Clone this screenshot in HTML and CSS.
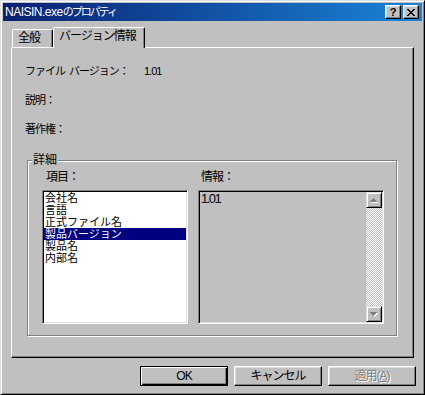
FILE: index.html
```html
<!DOCTYPE html>
<html lang="ja">
<head>
    <meta charset="UTF-8">
    <title>NAISIN.exeのプロパティ</title>
    <link rel="stylesheet" href="styles.css">
</head>
<body>
    <div class="window">
        <div class="titlebar">
            <div class="title">NAISIN.exe<span class="title-jp">のプロパティ</span></div>
            <div class="caption-buttons">
                <div class="cap-btn help">?</div>
                <div class="cap-btn">
                    <svg width="8" height="7" viewBox="0 0 8 7" shape-rendering="crispEdges">
                        <rect x="0" y="0" width="2" height="1"/><rect x="6" y="0" width="2" height="1"/>
                        <rect x="1" y="1" width="2" height="1"/><rect x="5" y="1" width="2" height="1"/>
                        <rect x="2" y="2" width="4" height="1"/>
                        <rect x="3" y="3" width="2" height="1"/>
                        <rect x="2" y="4" width="4" height="1"/>
                        <rect x="1" y="5" width="2" height="1"/><rect x="5" y="5" width="2" height="1"/>
                        <rect x="0" y="6" width="2" height="1"/><rect x="6" y="6" width="2" height="1"/>
                    </svg>
                </div>
            </div>
        </div>

        <div class="content">
            <div class="tabs">
                <div class="tab">全般</div>
                <div class="tab active">バージョン情報</div>
            </div>

            <div class="panel">
                <div class="field">
                    <span class="field-label"><span class="word">ファイル</span>バージョン：</span>
                    <span class="field-value">1.01</span>
                </div>
                <div class="field">
                    <span class="field-label">説明：</span>
                </div>
                <div class="field">
                    <span class="field-label">著作権：</span>
                </div>

                <fieldset class="group">
                    <legend>詳細</legend>
                    <div class="columns">
                        <div class="col">
                            <div class="col-label items-label">項目：</div>
                            <ul class="listbox">
                                <li>会社名</li>
                                <li>言語</li>
                                <li>正式ファイル名</li>
                                <li class="selected">製品バージョン</li>
                                <li>製品名</li>
                                <li>内部名</li>
                            </ul>
                        </div>
                        <div class="col">
                            <div class="col-label info-label">情報：</div>
                            <div class="infobox">
                                <div class="info-text">1.01</div>
                                <div class="scrollbar">
                                    <div class="sb-btn">
                                        <svg width="8" height="5" viewBox="0 0 8 5" shape-rendering="crispEdges">
                                            <g fill="#fff">
                                                <rect x="4" y="1" width="1" height="1"/><rect x="3" y="2" width="3" height="1"/>
                                                <rect x="2" y="3" width="5" height="1"/><rect x="1" y="4" width="7" height="1"/>
                                            </g>
                                            <g fill="#808080">
                                                <rect x="3" y="0" width="1" height="1"/><rect x="2" y="1" width="3" height="1"/>
                                                <rect x="1" y="2" width="5" height="1"/><rect x="0" y="3" width="7" height="1"/>
                                            </g>
                                        </svg>
                                    </div>
                                    <div class="sb-track"></div>
                                    <div class="sb-btn">
                                        <svg width="8" height="5" viewBox="0 0 8 5" shape-rendering="crispEdges">
                                            <g fill="#fff">
                                                <rect x="1" y="1" width="7" height="1"/><rect x="2" y="2" width="5" height="1"/>
                                                <rect x="3" y="3" width="3" height="1"/><rect x="4" y="4" width="1" height="1"/>
                                            </g>
                                            <g fill="#808080">
                                                <rect x="0" y="0" width="7" height="1"/><rect x="1" y="1" width="5" height="1"/>
                                                <rect x="2" y="2" width="3" height="1"/><rect x="3" y="3" width="1" height="1"/>
                                            </g>
                                        </svg>
                                    </div>
                                </div>
                            </div>
                        </div>
                    </div>
                </fieldset>
            </div>

            <div class="buttons">
                <div class="btn default">OK</div>
                <div class="btn">キャンセル</div>
                <div class="btn disabled">適用(<u>A</u>)</div>
            </div>
        </div>
    </div>
</body>
</html>
```

FILE: styles.css
```css
* {
    box-sizing: border-box;
}

html, body {
    margin: 0;
    padding: 0;
}

body {
    background-color: #c0c0c0;
    color: #000000;
    font-family: "Liberation Sans", "Noto Sans CJK JP", sans-serif;
    font-size: 11px;
}

.window {
    width: 425px;
    height: 395px;
    padding: 2px;
    border: 1px solid;
    border-color: #dfdfdf #000000 #000000 #dfdfdf;
    box-shadow: inset 1px 1px #ffffff, inset -1px -1px #808080;
    background-color: #c0c0c0;
    display: flex;
    flex-direction: column;
}

/* title bar */
.titlebar {
    height: 18px;
    padding: 0 3px 0 2px;
    display: flex;
    align-items: center;
    justify-content: space-between;
    background: linear-gradient(to right, #0a2070, #1a84d8);
    color: #ffffff;
}

.title {
    font-size: 12px;
    letter-spacing: -0.5px;
    line-height: 16px;
}

.title-jp {
    font-size: 11px;
    letter-spacing: -2px;
}

.caption-buttons {
    display: flex;
    gap: 2px;
}

.cap-btn {
    width: 16px;
    height: 14px;
    background-color: #c0c0c0;
    border: 1px solid;
    border-color: #ffffff #000000 #000000 #ffffff;
    box-shadow: inset -1px -1px #808080, inset 1px 1px #dfdfdf;
    display: flex;
    align-items: center;
    justify-content: center;
    color: #000000;
}

.cap-btn.help {
    font-weight: bold;
    font-size: 11px;
    line-height: 11px;
}

/* body */
.content {
    flex: 1;
    padding: 6px 8px 0 8px;
    display: flex;
    flex-direction: column;
}

.tabs {
    height: 20px;
    padding-left: 1px;
    display: flex;
    align-items: flex-end;
    position: relative;
    z-index: 1;
}

.tab {
    height: 18px;
    padding: 0 0 0 5px;
    border-top: 1px solid #ffffff;
    border-left: 1px solid #ffffff;
    border-right: 1px solid #000000;
    box-shadow: inset -1px 0 #808080;
    border-radius: 2px 2px 0 0;
    background-color: #c0c0c0;
    font-size: 12px;
    letter-spacing: -1px;
    line-height: 16px;
    width: 41px;
}

.tab.active {
    width: 92px;
    height: 21px;
    margin-bottom: -1px;
    line-height: 16px;
}

.panel {
    height: 311px;
    padding: 16px 0 0 0;
    border: 1px solid;
    border-color: #ffffff #000000 #000000 #ffffff;
    box-shadow: inset -1px -1px #808080;
    display: flex;
    flex-direction: column;
}

.field {
    height: 14px;
    line-height: 14px;
    padding-left: 13px;
    display: flex;
    letter-spacing: -1px;
}

.field + .field {
    margin-top: 15px;
}

.field-label {
    width: 119px;
}

.field-label .word {
    margin-right: 4px;
}

/* group box */
.group {
    margin: 18px 16px 0 15px;
    padding: 0;
    border: 1px solid #808080;
    box-shadow: inset 1px 1px #ffffff, 1px 1px #ffffff;
    min-width: 0;
}

.group legend {
    margin-left: 4px;
    padding: 0 1px;
    background-color: #c0c0c0;
    font-size: 12px;
    line-height: 12px;
}

.columns {
    display: flex;
    gap: 10px;
    padding: 5px 11px 11px 14px;
}

.col-label {
    height: 12px;
    line-height: 12px;
    margin-bottom: 7px;
    font-size: 12px;
    letter-spacing: -1px;
}

.items-label {
    padding-left: 4px;
}

.info-label {
    padding-left: 3px;
}

.listbox,
.infobox {
    height: 134px;
    border: 1px solid;
    border-color: #808080 #ffffff #ffffff #808080;
    box-shadow: inset 1px 1px #000000, inset -1px -1px #dfdfdf;
}

.listbox {
    width: 146px;
    margin: 0;
    padding: 1px 1px 0 1px;
    list-style: none;
    background-color: #ffffff;
    font-size: 11px;
    line-height: 12px;
}

.listbox li {
    height: 12px;
    padding-left: 1px;
}

.listbox li.selected {
    background-color: #000080;
    color: #ffffff;
}

.infobox {
    width: 186px;
    padding: 1px;
    display: flex;
    background-color: #c0c0c0;
}

.info-text {
    flex: 1;
    font-size: 13px;
    letter-spacing: -1.5px;
    line-height: 12px;
    padding: 1px 0 0 1px;
}

.scrollbar {
    width: 16px;
    display: flex;
    flex-direction: column;
    background: conic-gradient(#c0c0c0 0 25%, #ffffff 0 50%, #c0c0c0 0 75%, #ffffff 0) 0 0 / 2px 2px;
}

.sb-btn {
    height: 16px;
    background-color: #c0c0c0;
    border: 1px solid;
    border-color: #dfdfdf #000000 #000000 #dfdfdf;
    box-shadow: inset 1px 1px #ffffff, inset -1px -1px #808080;
    display: flex;
    align-items: center;
    justify-content: center;
}

.sb-track {
    flex: 1;
}

/* dialog buttons */
.buttons {
    margin: 8px -2px 0 0;
    display: flex;
    justify-content: flex-end;
    gap: 6px;
}

.btn {
    width: 88px;
    height: 20px;
    border: 1px solid;
    border-color: #ffffff #000000 #000000 #ffffff;
    box-shadow: inset -1px -1px #808080, inset 1px 1px #dfdfdf;
    text-align: center;
    font-size: 12px;
    line-height: 18px;
    letter-spacing: -1px;
}

.btn.default {
    border-color: #000000;
    box-shadow: inset 1px 1px #ffffff, inset -1px -1px #000000, inset -2px -2px #808080;
}

.btn.disabled {
    color: #808080;
    text-shadow: 1px 1px #ffffff;
}
```
